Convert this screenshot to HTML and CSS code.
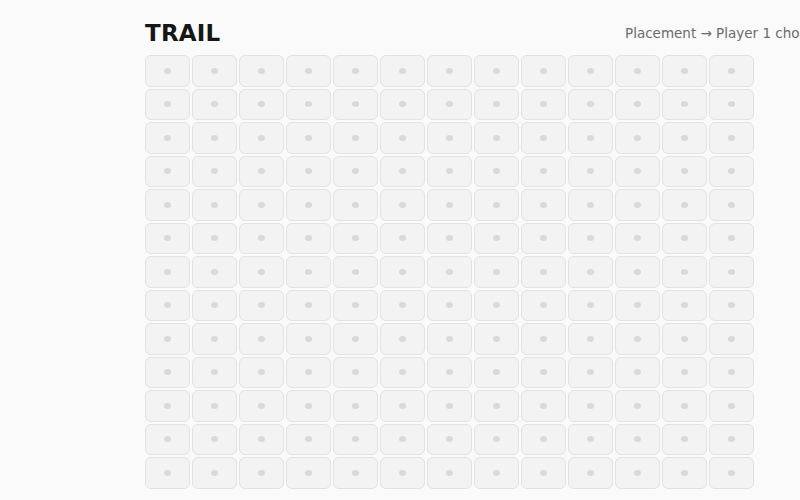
FILE: index.html
```html
<!DOCTYPE html>
<html>
  <head>
    <title>Trail</title>
    <link rel="stylesheet" href="styles.css">
  </head>
  <body>
    <div class="game">
      <div class="header">
        <h1 class="title">TRAIL</h1>
        <span class="status">Placement → Player 1 chooses a starting cell</span>
      </div>
      <div id="board" class="board"></div>
    </div>
    <script>
      const board = document.getElementById("board");
      let html = "";
      for (let i = 0; i < 13 * 13; i++) {
        html += `<div class="cell"><span class="dot"></span></div>`;
      }
      board.innerHTML = html;
    </script>
  </body>
</html>
```

FILE: styles.css
```css
body {
  font-family: "DejaVu Sans", sans-serif;
  background-color: #fafafa;
  color: #1a1a1a;
  margin: 0;
  padding: 0;
  overflow: hidden;
}

.game {
  padding: 19px 0 0 145px;
  width: 609px;
}

.header {
  display: flex;
  justify-content: space-between;
  align-items: center;
  height: 28px;
  margin-bottom: 8px;
}

.title {
  margin: 0;
  font-size: 23px;
  font-weight: bold;
  letter-spacing: 0.2px;
  color: #161616;
}

.status {
  width: 129px;
  white-space: nowrap;
  font-size: 13.5px;
  color: #6a6a6a;
}

.board {
  display: grid;
  grid-template-columns: repeat(13, 45px);
  grid-auto-rows: 31.5px;
  gap: 2px;
}

.cell {
  display: flex;
  align-items: center;
  justify-content: center;
  background-color: #f3f3f3;
  border: 1px solid #e2e2e2;
  border-radius: 6px;
}

.dot {
  width: 7px;
  height: 6px;
  border-radius: 50%;
  background-color: #d9d9d9;
}
```
